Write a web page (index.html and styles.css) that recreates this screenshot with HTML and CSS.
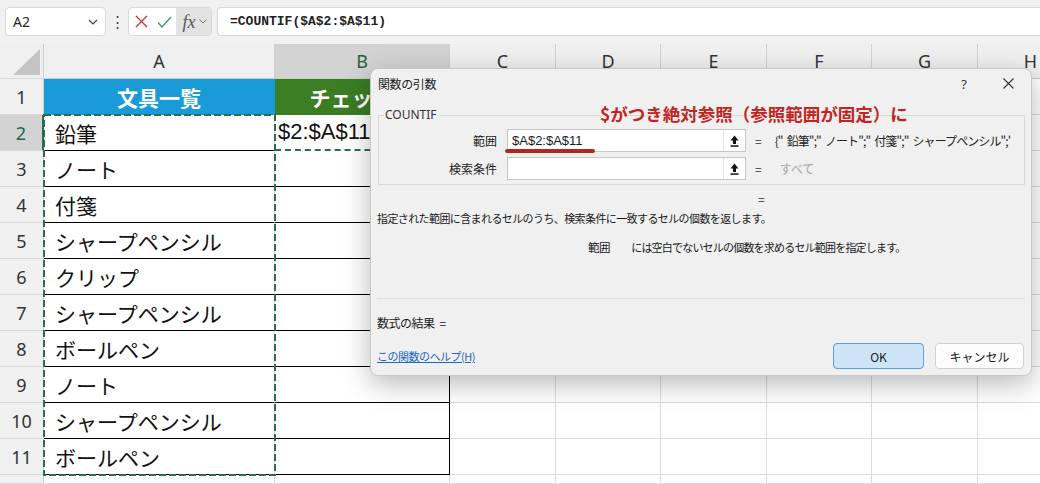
FILE: index.html
```html
<!DOCTYPE html>
<html lang="ja">
<head>
<meta charset="utf-8">
<title>COUNTIF</title>
<link rel="stylesheet" href="styles.css">
</head>
<body>
<div class="fbar">
  <div class="namebox"><span>A2</span><svg width="10" height="6" viewBox="0 0 10 6"><path d="M1 1l4 4 4-4" fill="none" stroke="#444" stroke-width="1.2"/></svg></div>
  <div class="vdots">⋮</div>
  <div class="fbtns">
    <span class="bx"><svg width="13" height="13" viewBox="0 0 13 13"><path d="M1 1l11 11M12 1L1 12" stroke="#c8323c" stroke-width="1.3" fill="none"/></svg></span>
    <span class="bc"><svg width="15" height="12" viewBox="0 0 15 12"><path d="M1 6.5l4 4.5 9-10" stroke="#3c9a5f" stroke-width="1.3" fill="none"/></svg></span>
    <span class="bfx"><i>fx</i><svg width="8" height="5" viewBox="0 0 8 5"><path d="M0.5 0.5l3.5 3.5 3.5-3.5" fill="none" stroke="#777" stroke-width="1"/></svg></span>
  </div>
  <div class="finput">=COUNTIF($A$2:$A$11)</div>
</div>

<div class="sheet">
  <div class="row hdr">
    <div class="rh corner"><svg width="30" height="28" viewBox="0 0 30 28"><polygon points="29,1 29,27 2,27" fill="#c4c4c4"/></svg></div>
    <div class="ch ca">A</div><div class="ch cb sel">B</div><div class="ch cc">C</div><div class="ch cd">D</div><div class="ch ce">E</div><div class="ch cf">F</div><div class="ch cg">G</div><div class="ch chh">H</div>
  </div>
  <div class="row">
    <div class="rh">1</div>
    <div class="c ca title-a">文具一覧</div><div class="c cb title-b">チェック数</div>
    <div class="c cc"></div><div class="c cd"></div><div class="c ce"></div><div class="c cf"></div><div class="c cg"></div><div class="c chh"></div>
  </div>
  <div class="row">
    <div class="rh rsel">2</div>
    <div class="c ca item">鉛筆</div><div class="c cb box edit">$2:$A$11</div>
    <div class="c cc"></div><div class="c cd"></div><div class="c ce"></div><div class="c cf"></div><div class="c cg"></div><div class="c chh"></div>
  </div>
  <div class="row">
    <div class="rh">3</div>
    <div class="c ca item">ノート</div><div class="c cb box"></div>
    <div class="c cc"></div><div class="c cd"></div><div class="c ce"></div><div class="c cf"></div><div class="c cg"></div><div class="c chh"></div>
  </div>
  <div class="row">
    <div class="rh">4</div>
    <div class="c ca item">付箋</div><div class="c cb box"></div>
    <div class="c cc"></div><div class="c cd"></div><div class="c ce"></div><div class="c cf"></div><div class="c cg"></div><div class="c chh"></div>
  </div>
  <div class="row">
    <div class="rh">5</div>
    <div class="c ca item">シャープペンシル</div><div class="c cb box"></div>
    <div class="c cc"></div><div class="c cd"></div><div class="c ce"></div><div class="c cf"></div><div class="c cg"></div><div class="c chh"></div>
  </div>
  <div class="row">
    <div class="rh">6</div>
    <div class="c ca item">クリップ</div><div class="c cb box"></div>
    <div class="c cc"></div><div class="c cd"></div><div class="c ce"></div><div class="c cf"></div><div class="c cg"></div><div class="c chh"></div>
  </div>
  <div class="row">
    <div class="rh">7</div>
    <div class="c ca item">シャープペンシル</div><div class="c cb box"></div>
    <div class="c cc"></div><div class="c cd"></div><div class="c ce"></div><div class="c cf"></div><div class="c cg"></div><div class="c chh"></div>
  </div>
  <div class="row">
    <div class="rh">8</div>
    <div class="c ca item">ボールペン</div><div class="c cb box"></div>
    <div class="c cc"></div><div class="c cd"></div><div class="c ce"></div><div class="c cf"></div><div class="c cg"></div><div class="c chh"></div>
  </div>
  <div class="row">
    <div class="rh">9</div>
    <div class="c ca item">ノート</div><div class="c cb box"></div>
    <div class="c cc"></div><div class="c cd"></div><div class="c ce"></div><div class="c cf"></div><div class="c cg"></div><div class="c chh"></div>
  </div>
  <div class="row">
    <div class="rh">10</div>
    <div class="c ca item">シャープペンシル</div><div class="c cb box"></div>
    <div class="c cc"></div><div class="c cd"></div><div class="c ce"></div><div class="c cf"></div><div class="c cg"></div><div class="c chh"></div>
  </div>
  <div class="row">
    <div class="rh">11</div>
    <div class="c ca item">ボールペン</div><div class="c cb box"></div>
    <div class="c cc"></div><div class="c cd"></div><div class="c ce"></div><div class="c cf"></div><div class="c cg"></div><div class="c chh"></div>
  </div>
  <div class="row last">
    <div class="rh"></div>
    <div class="c ca"></div><div class="c cb"></div>
    <div class="c cc"></div><div class="c cd"></div><div class="c ce"></div><div class="c cf"></div><div class="c cg"></div><div class="c chh"></div>
  </div>
  <svg class="ants" width="236" height="366" viewBox="0 0 236 366"><rect x="2" y="2" width="231" height="360" fill="none" stroke="#2b6e4e" stroke-width="2" stroke-dasharray="7 3"/></svg>
</div>

<div class="dialog">
  <div class="dlg-head">
    <span class="dlg-title">関数の引数</span>
    <span class="dlg-ctrls"><span class="help">?</span><svg width="11" height="11" viewBox="0 0 11 11"><path d="M0.5 0.5l10 10M10.5 0.5l-10 10" stroke="#333" stroke-width="1.1" fill="none"/></svg></span>
  </div>
  <p class="note">$がつき絶対参照（参照範囲が固定）に</p>
  <fieldset class="args">
    <legend>COUNTIF</legend>
    <div class="arg">
      <span class="lbl">範囲</span>
      <div class="field"><span class="val">$A$2:$A$11</span><span class="collapse"><svg width="9" height="12" viewBox="0 0 9 12"><path d="M4.5 0.5L8.5 5.5H6V9H3V5.5H0.5Z" fill="#111"/><rect x="0.5" y="10.3" width="8" height="1.5" fill="#111"/></svg></span><span class="mark"></span></div>
      <span class="eq">=</span>
      <span class="res">{"<span class="sp"></span>鉛筆";"<span class="sp"></span>ノート";"<span class="sp"></span>付箋";"<span class="sp"></span>シャープペンシル";'</span>
    </div>
    <div class="arg second">
      <span class="lbl">検索条件</span>
      <div class="field"><span class="val"></span><span class="collapse"><svg width="9" height="12" viewBox="0 0 9 12"><path d="M4.5 0.5L8.5 5.5H6V9H3V5.5H0.5Z" fill="#111"/><rect x="0.5" y="10.3" width="8" height="1.5" fill="#111"/></svg></span></div>
      <span class="eq">=</span>
      <span class="res muted">すべて</span>
    </div>
  </fieldset>
  <div class="total">=</div>
  <p class="desc">指定された範囲に含まれるセルのうち、検索条件に一致するセルの個数を返します。</p>
  <p class="argdesc"><span class="argname">範囲</span><span>には空白でないセルの個数を求めるセル範囲を指定します。</span></p>
  <hr class="sep">
  <div class="result">数式の結果<span class="req">=</span></div>
  <div class="foot">
    <a class="helplink" href="#">この関数のヘルプ(H)</a>
    <div class="btns"><button class="btn ok">OK</button><button class="btn cancel">キャンセル</button></div>
  </div>
</div>
</body>
</html>
```

FILE: styles.css
```css
* { box-sizing: border-box; }
html, body { margin: 0; padding: 0; }
body {
  width: 1040px;
  height: 484px;
  overflow: hidden;
  position: relative;
  background: #fff;
  font-family: "Noto Sans", "Noto Sans CJK JP", sans-serif;
  color: #1a1a1a;
}

/* formula bar */
.fbar {
  height: 44px;
  background: #f1f1f1;
  display: flex;
  align-items: flex-start;
  padding: 7px 0 0 5px;
}
.namebox {
  width: 101px;
  height: 29px;
  flex: none;
  background: #fff;
  border: 1px solid #d9d9d9;
  border-radius: 4px;
  display: flex;
  align-items: center;
  justify-content: space-between;
  padding: 0 7px 0 7px;
  font-size: 14px;
  color: #262626;
}
.vdots {
  width: 22px;
  flex: none;
  height: 29px;
  line-height: 29px;
  text-align: center;
  font-size: 15px;
  color: #444;
}
.fbtns {
  width: 84px;
  height: 29px;
  flex: none;
  display: flex;
  background: #fff;
  border: 1px solid #d9d9d9;
  border-radius: 4px;
  overflow: hidden;
}
.bx, .bc, .bfx { display: flex; align-items: center; justify-content: center; }
.bx { width: 24px; }
.bc { width: 23px; }
.bfx {
  flex: 1;
  background: #e3e3e3;
  gap: 3px;
  padding-left: 2px;
}
.bfx i {
  font-family: "Liberation Serif", serif;
  font-size: 18px;
  color: #555;
  line-height: 1;
}
.finput {
  flex: 1;
  margin-left: 5px;
  height: 29px;
  background: #fff;
  border: 1px solid #d6d6d6;
  border-right: none;
  border-radius: 4px 0 0 4px;
  padding-left: 12px;
  font-family: "Liberation Mono", monospace;
  font-weight: bold;
  font-size: 13px;
  line-height: 27px;
  color: #222;
}

/* sheet */
.sheet { position: relative; }
.row { display: flex; height: 36px; }
.row.hdr { height: 35px; }
.row.last { height: 9px; overflow: hidden; }
.rh {
  width: 44px;
  flex: none;
  background: #f0f0f0;
  border-right: 1px solid #cfcfcf;
  border-bottom: 1px solid #d8d8d8;
  display: flex;
  align-items: center;
  justify-content: center;
  font-family: "Noto Sans", sans-serif;
  font-size: 18px;
  color: #333;
}
.rh.corner { align-items: flex-end; justify-content: flex-end; padding: 0 2px 2px 0; }
.rh.corner svg { display: block; }
.rh.rsel {
  background: #d3d3d3;
  color: #1e6b3c;
  border-right: 2px solid #2b6e4e;
}
.ch {
  flex: none;
  background: #f0f0f0;
  border-right: 1px solid #d0d0d0;
  border-bottom: 1px solid #cacaca;
  display: flex;
  align-items: center;
  justify-content: center;
  font-family: "Noto Sans", sans-serif;
  font-size: 18px;
  color: #333;
}
.ch.sel { background: #d3d3d3; color: #27613f; }
.c {
  flex: none;
  border-right: 1px solid #dcdcdc;
  border-bottom: 1px solid #dcdcdc;
}
.ca { width: 231px; }
.cb { width: 175px; }
.cc, .ce, .cg, .chh { width: 106px; }
.cd, .cf { width: 105px; }

.title-a, .title-b {
  display: flex;
  align-items: center;
  justify-content: center;
  color: #fff;
  font-family: "Noto Sans CJK JP", sans-serif;
  font-weight: bold;
  font-size: 21px;
  border-color: transparent;
}
.title-a { background: #1a9ad6; }
.title-b { background: #3a7d23; }

.item {
  display: flex;
  align-items: center;
  padding-left: 11px;
  font-family: "Noto Sans CJK JP", sans-serif;
  font-size: 21px;
  color: #111;
  border-bottom-color: #000;
  white-space: nowrap;
}
.box { border-bottom-color: #000; border-right-color: #000; }
.edit {
  display: flex;
  align-items: center;
  padding-left: 3px;
  font-family: "Liberation Sans", sans-serif;
  font-size: 22px;
  color: #111;
  white-space: nowrap;
  overflow: hidden;
  border-bottom: 2px dashed #2b6e4e;
}

.ants {
  position: absolute;
  left: 42px;
  top: 69px;
  pointer-events: none;
}

/* dialog */
.dialog {
  position: absolute;
  left: 370px;
  top: 68px;
  width: 662px;
  height: 308px;
  background: #f0f0f0;
  border: 1px solid #c8c8c8;
  border-radius: 8px;
  box-shadow: 0 8px 28px rgba(0, 0, 0, 0.28);
  padding: 0 6px;
  font-family: "Noto Sans CJK JP", sans-serif;
  font-size: 12px;
  color: #1a1a1a;
}
.dlg-head {
  height: 29px;
  display: flex;
  align-items: center;
  justify-content: space-between;
}
.dlg-title { padding-left: 1px; font-size: 12px; letter-spacing: -0.4px; }
.dlg-ctrls { display: flex; align-items: center; gap: 36px; margin-right: 11px; }
.help { font-family: "Noto Sans", sans-serif; font-size: 13px; color: #333; }
.dlg-ctrls svg { display: block; }

.note {
  position: absolute;
  left: 229px;
  top: 34px;
  margin: 0;
  font-weight: bold;
  font-size: 17.5px;
  line-height: 22px;
  color: #c0261f;
  white-space: nowrap;
}

.args {
  margin: 8px 0 0 1px;
  padding: 5px 0 4px 0;
  border: 1px solid #d9d9d9;
  min-inline-size: 0;
}
.args legend {
  margin-left: 5px;
  padding: 0 1px;
  font-family: "Noto Sans", sans-serif;
  font-size: 12px;
  line-height: 18px;
  color: #333;
}
.arg {
  display: grid;
  grid-template-columns: 118px 249px auto minmax(0, 1fr);
  align-items: center;
  height: 23px;
}
.arg.second { margin-top: 5px; }
.lbl { text-align: right; font-size: 12px; color: #222; }
.field {
  position: relative;
  margin-left: 10px;
  height: 23px;
  background: #fff;
  border: 1px solid #c6c6c6;
  display: flex;
}
.val {
  flex: 1;
  padding-left: 4px;
  font-family: "Liberation Sans", sans-serif;
  font-size: 13px;
  line-height: 21px;
  color: #1a1a1a;
}
.collapse {
  width: 22px;
  display: flex;
  align-items: center;
  justify-content: center;
  background: #fff;
  border-left: 1px solid #e2e2e2;
}
.mark {
  position: absolute;
  left: -3px;
  bottom: -2px;
  width: 90px;
  height: 4px;
  border-radius: 2px;
  background: #b3261e;
}
.eq { margin-left: 9px; font-size: 12px; color: #333; }
.res {
  margin: 0 4px 0 13px;
  white-space: nowrap;
  font-size: 12px;
  letter-spacing: -0.9px;
  color: #222;
}
.res .sp { display: inline-block; width: 4px; }
.res.muted { color: #a3a3a3; letter-spacing: 0; margin-left: 18px; }

.total { margin-top: 6px; padding-left: 381px; line-height: 16px; font-size: 12px; color: #333; }
.desc {
  margin: 3px 0 0 0;
  line-height: 16px;
  font-size: 11px;
  letter-spacing: -0.6px;
  white-space: nowrap;
}
.argdesc {
  margin: 13px 0 0 0;
  padding-left: 211px;
  line-height: 16px;
  font-size: 11px;
  letter-spacing: -0.8px;
  white-space: nowrap;
}
.argname { margin-right: 21px; font-size: 11.5px; letter-spacing: -0.4px; }
.sep { margin: 43px 0 0 0; border: 0; border-top: 1px solid #dedede; height: 0; }
.result { margin-top: 16px; line-height: 16px; font-size: 12px; letter-spacing: -0.5px; }
.req { margin-left: 5px; }
.foot { margin-top: 12px; height: 26px; display: flex; align-items: center; }
.helplink {
  color: #2166c4;
  text-decoration: underline;
  font-size: 11px;
  letter-spacing: -0.5px;
}
.btns { margin-left: auto; margin-right: 1px; display: flex; gap: 11px; }
.btn {
  height: 26px;
  border-radius: 4px;
  font-family: "Noto Sans CJK JP", sans-serif;
  font-size: 12px;
  color: #1a1a1a;
  padding: 0;
}
.ok { width: 91px; background: #cde4f7; border: 1px solid #5b9fdc; }
.cancel { width: 89px; background: #fdfdfd; border: 1px solid #d0d0d0; }
```
